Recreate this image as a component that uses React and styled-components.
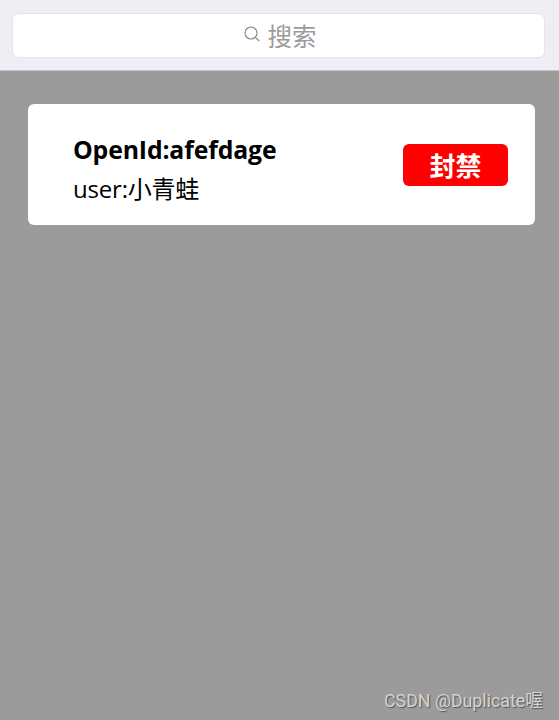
import React from 'react';
import styled, { createGlobalStyle } from 'styled-components';

const App = () => {
  return (
    <Page>
      <GlobalStyle />
      <SearchBar>
        <SearchBox>
          <SearchIcon viewBox="0 0 16 16">
            <circle cx="7" cy="7" r="6" />
            <path d="M11.3 11.3 L15.3 15" />
          </SearchIcon>
          <SearchText>搜索</SearchText>
        </SearchBox>
      </SearchBar>

      <UserList>
        <UserCard>
          <UserInfo>
            <OpenId>OpenId:afefdage</OpenId>
            <UserName>user:小青蛙</UserName>
          </UserInfo>
          <BanButton>封禁</BanButton>
        </UserCard>
      </UserList>

      <Watermark>CSDN @Duplicate喔</Watermark>
    </Page>
  );
};

const GlobalStyle = createGlobalStyle`
  body {
    margin: 0;
    background-color: #9b9b9b;
  }

  * {
    box-sizing: border-box;
  }
`;

const Page = styled.div`
  height: 100vh;
  display: flex;
  flex-direction: column;
  overflow: hidden;
  background-color: #9b9b9b;
  font-family: 'Open Sans', 'Noto Sans CJK SC', sans-serif;
  color: #000;
`;

const SearchBar = styled.div`
  height: 71px;
  flex-shrink: 0;
  padding: 13px 14px 13px 12px;
  background-color: #efeef4;
  border-bottom: 1px solid #c4c3c8;
`;

const SearchBox = styled.div`
  height: 45px;
  display: flex;
  align-items: center;
  justify-content: center;
  gap: 8px;
  padding-left: 3px;
  background-color: #fff;
  border: 1px solid #e4e4e8;
  border-radius: 7px;
`;

const SearchIcon = styled.svg`
  width: 16px;
  height: 16px;
  margin-bottom: 3px;
  fill: none;
  stroke: #858585;
  stroke-width: 1.1;
`;

const SearchText = styled.span`
  padding-top: 1px;
  font-size: 24.5px;
  line-height: 43px;
  color: #9b9b9b;
`;

const UserList = styled.div`
  flex: 1;
  padding: 33px 24px 0 28px;
`;

const UserCard = styled.div`
  height: 121px;
  display: flex;
  justify-content: space-between;
  padding: 26px 27px 0 45px;
  background-color: #fff;
  border-radius: 6px;
`;

const UserInfo = styled.div`
  display: flex;
  flex-direction: column;
`;

const OpenId = styled.div`
  font-size: 24.8px;
  line-height: 39px;
  font-weight: 700;
  letter-spacing: -0.14px;
`;

const UserName = styled.div`
  font-size: 24px;
  line-height: 40px;
  letter-spacing: -0.2px;
`;

const BanButton = styled.button`
  width: 105px;
  height: 42px;
  margin-top: 14px;
  padding: 2px 0 0;
  border: none;
  border-radius: 6px;
  background-color: #ff0000;
  color: #fff;
  font-family: inherit;
  font-size: 26px;
  font-weight: bold;
  line-height: 40px;
`;

const Watermark = styled.div`
  align-self: flex-end;
  padding: 0 16px 6px 0;
  font-family: Roboto, 'Noto Sans CJK SC', sans-serif;
  font-size: 17.8px;
  line-height: 26px;
  color: #d4d4d4;
  text-shadow: 1px 1px 1px #555;
`;

export default App;
